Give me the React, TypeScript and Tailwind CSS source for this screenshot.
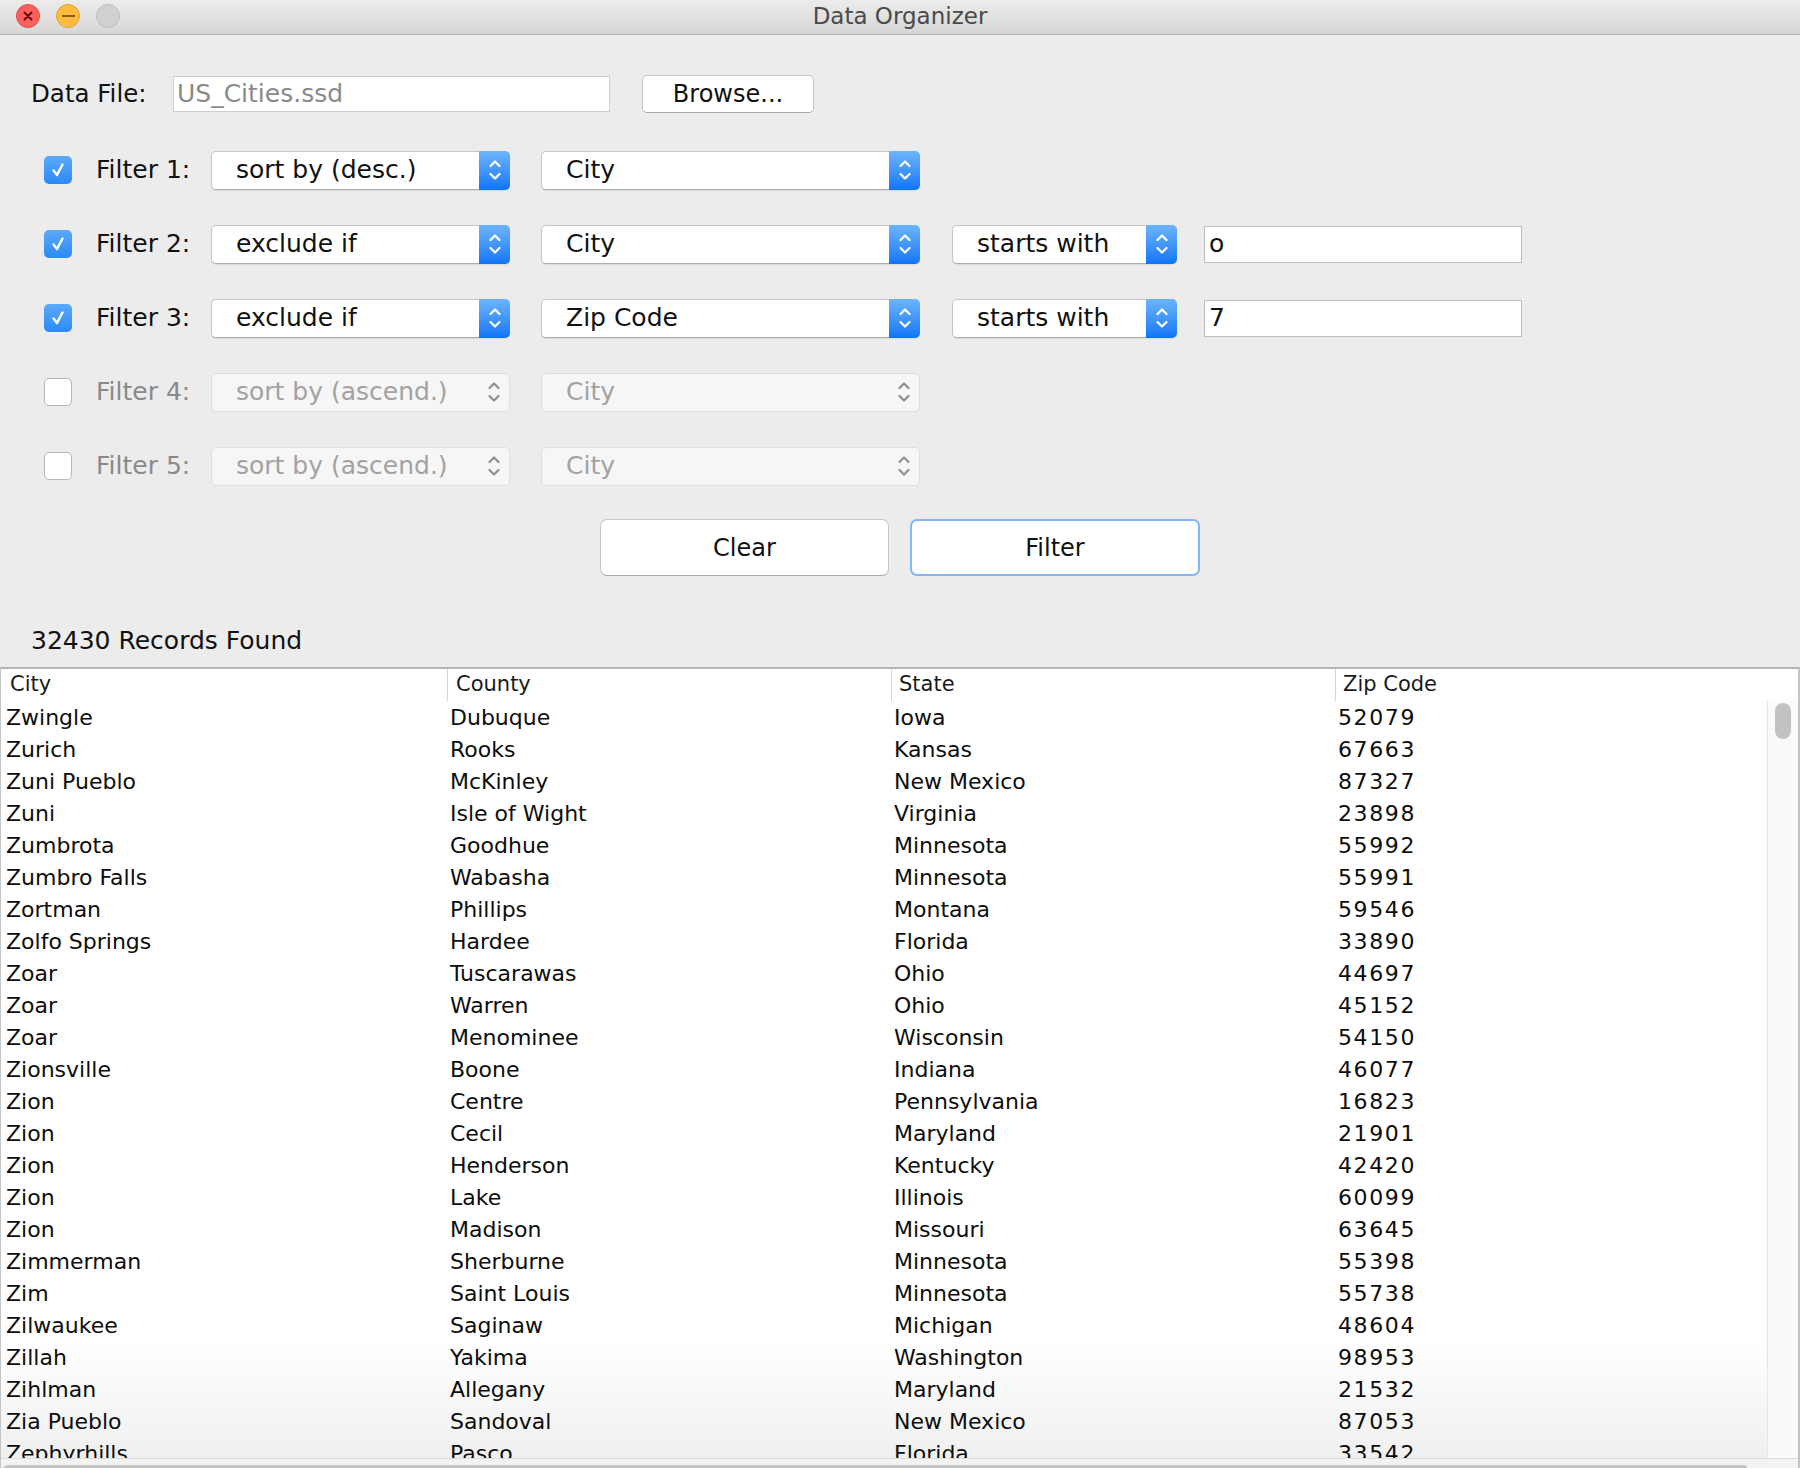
import React from 'react'

const rows = [
  ['Zwingle', 'Dubuque', 'Iowa', '52079'],
  ['Zurich', 'Rooks', 'Kansas', '67663'],
  ['Zuni Pueblo', 'McKinley', 'New Mexico', '87327'],
  ['Zuni', 'Isle of Wight', 'Virginia', '23898'],
  ['Zumbrota', 'Goodhue', 'Minnesota', '55992'],
  ['Zumbro Falls', 'Wabasha', 'Minnesota', '55991'],
  ['Zortman', 'Phillips', 'Montana', '59546'],
  ['Zolfo Springs', 'Hardee', 'Florida', '33890'],
  ['Zoar', 'Tuscarawas', 'Ohio', '44697'],
  ['Zoar', 'Warren', 'Ohio', '45152'],
  ['Zoar', 'Menominee', 'Wisconsin', '54150'],
  ['Zionsville', 'Boone', 'Indiana', '46077'],
  ['Zion', 'Centre', 'Pennsylvania', '16823'],
  ['Zion', 'Cecil', 'Maryland', '21901'],
  ['Zion', 'Henderson', 'Kentucky', '42420'],
  ['Zion', 'Lake', 'Illinois', '60099'],
  ['Zion', 'Madison', 'Missouri', '63645'],
  ['Zimmerman', 'Sherburne', 'Minnesota', '55398'],
  ['Zim', 'Saint Louis', 'Minnesota', '55738'],
  ['Zilwaukee', 'Saginaw', 'Michigan', '48604'],
  ['Zillah', 'Yakima', 'Washington', '98953'],
  ['Zihlman', 'Allegany', 'Maryland', '21532'],
  ['Zia Pueblo', 'Sandoval', 'New Mexico', '87053'],
  ['Zephyrhills', 'Pasco', 'Florida', '33542'],
]

const filters = [
  { on: true, op: 'sort by (desc.)', field: 'City' },
  { on: true, op: 'exclude if', field: 'City', cond: 'starts with', value: 'o' },
  { on: true, op: 'exclude if', field: 'Zip Code', cond: 'starts with', value: '7' },
  { on: false, op: 'sort by (ascend.)', field: 'City' },
  { on: false, op: 'sort by (ascend.)', field: 'City' },
]

function Chevrons({ color }: { color: string }) {
  return (
    <svg width="14" height="26" viewBox="0 0 14 26" fill="none" stroke={color} strokeWidth="2.2" strokeLinecap="round" strokeLinejoin="round">
      <path d="M2.5 9 L7 4.5 L11.5 9" />
      <path d="M2.5 17 L7 21.5 L11.5 17" />
    </svg>
  )
}

function Combo({ label, width, enabled }: { label: string; width: string; enabled: boolean }) {
  if (!enabled) {
    return (
      <div className={`${width} h-[39px] flex items-center rounded-[5px] border border-[#dedede] bg-[#f6f6f6]`}>
        <span className="flex-1 pl-[24px] text-[25px] text-[#a2a2a2]">{label}</span>
        <div className="w-[31px] flex justify-center">
          <Chevrons color="#8f8f8f" />
        </div>
      </div>
    )
  }
  return (
    <div className={`${width} h-[39px] flex items-stretch rounded-[5px] border border-[#c6c6c6] border-b-[#acacac] bg-white shadow-[0_1px_1px_rgba(0,0,0,0.08)]`}>
      <span className="flex-1 flex items-center pl-[24px] text-[25px] text-[#111]">{label}</span>
      <div className="w-[31px] -my-px -mr-px flex items-center justify-center rounded-r-[5px] bg-gradient-to-b from-[#6cb4fb] to-[#0a75f6]">
        <Chevrons color="#ffffff" />
      </div>
    </div>
  )
}

function Checkbox({ on }: { on: boolean }) {
  if (!on) {
    return <div className="w-[28px] h-[28px] rounded-[5px] border border-[#b7b7b7] bg-white" />
  }
  return (
    <div className="w-[28px] h-[28px] rounded-[5px] bg-gradient-to-b from-[#5aa9fb] to-[#2a8af5] flex items-center justify-center">
      <svg width="18" height="18" viewBox="0 0 18 18" fill="none" stroke="#fff" strokeWidth="2.4" strokeLinecap="round" strokeLinejoin="round">
        <path d="M4.5 9.5 L8 14 L13.5 3.5" />
      </svg>
    </div>
  )
}

export default function App() {
  return (
    <div className="w-[1800px] h-[1468px] overflow-hidden flex flex-col bg-[#ececec] font-['DejaVu_Sans',sans-serif] text-[#111]">
      {/* title bar */}
      <div className="relative h-[35px] flex-shrink-0 flex items-center justify-center bg-gradient-to-b from-[#ececec] to-[#d6d6d6] border-b border-[#b3b3b3]">
        <div className="absolute left-[16px] top-[4px] flex gap-[16px]">
          <div className="w-[24px] h-[24px] rounded-full bg-[#fc605c] border border-[#de4a45] flex items-center justify-center">
            <svg width="12" height="12" viewBox="0 0 12 12" stroke="#5a0505" strokeWidth="1.8" strokeLinecap="round">
              <path d="M2.5 2.5 L9.5 9.5 M9.5 2.5 L2.5 9.5" />
            </svg>
          </div>
          <div className="w-[24px] h-[24px] rounded-full bg-[#fdbc40] border border-[#dea236] flex items-center justify-center">
            <div className="w-[13px] h-[2px] bg-[#8f5a06]" />
          </div>
          <div className="w-[24px] h-[24px] rounded-full bg-[#d1d1d1] border border-[#bdbdbd]" />
        </div>
        <span className="-mt-[2px] text-[23px] text-[#4a4a4a]">Data Organizer</span>
      </div>

      {/* data file */}
      <div className="mt-[39px] h-[40px] flex items-center pl-[31px]">
        <span className="w-[142px] text-[24.5px]">Data File:</span>
        <div className="w-[437px] h-[36px] flex items-center pl-[3px] bg-white border border-[#cfcfcf] text-[25px] text-[#8a8a8a]">
          US_Cities.ssd
        </div>
        <button className="ml-[32px] w-[172px] h-[38px] rounded-[5px] bg-white border border-[#c6c6c6] border-b-[#a9a9a9] text-[24px] text-[#111]">
          Browse...
        </button>
      </div>

      {/* filters */}
      <div className="mt-[36px] flex flex-col gap-[34px]">
        {filters.map((f, i) => (
          <div key={i} className="h-[40px] flex items-center pl-[44px]">
            <Checkbox on={f.on} />
            <span className={`ml-[24px] w-[115px] text-[25px] ${f.on ? 'text-[#111]' : 'text-[#8a8a8a]'}`}>
              Filter {i + 1}:
            </span>
            <Combo label={f.op} width="w-[299px]" enabled={f.on} />
            <div className="ml-[31px]">
              <Combo label={f.field} width="w-[379px]" enabled={f.on} />
            </div>
            {f.cond && (
              <>
                <div className="ml-[32px]">
                  <Combo label={f.cond} width="w-[225px]" enabled={f.on} />
                </div>
                <div className="ml-[27px] w-[318px] h-[37px] flex items-center pl-[4px] bg-white border border-[#bdbdbd] text-[25px]">
                  {f.value}
                </div>
              </>
            )}
          </div>
        ))}
      </div>

      {/* buttons */}
      <div className="mt-[33px] flex justify-center gap-[21px]">
        <button className="w-[289px] h-[57px] rounded-[7px] bg-white border border-[#c6c6c6] border-b-[#a9a9a9] text-[24px]">
          Clear
        </button>
        <button className="w-[290px] h-[57px] rounded-[7px] bg-white border-2 border-[#82b7f3] text-[24px]">
          Filter
        </button>
      </div>

      <div className="mt-[50px] h-[30px] pl-[31px] flex items-center text-[25px]">32430 Records Found</div>

      {/* table */}
      <div className="mt-[11px] flex-1 min-h-0 flex flex-col bg-white border-t-2 border-[#b4b4b4] border-l border-r-2 border-l-[#c4c4c4] border-r-[#c4c4c4]">
        <div className="h-[32px] flex-shrink-0 grid grid-cols-[446px_444px_444px_1fr] items-center text-[21px] text-[#1a1a1a]">
          <div className="pl-[9px]">City</div>
          <div className="pl-[8px] border-l border-[#d6d6d6]">County</div>
          <div className="pl-[7px] border-l border-[#d6d6d6]">State</div>
          <div className="pl-[7px] border-l border-[#d6d6d6]">Zip Code</div>
        </div>
        <div className="flex-1 min-h-0 flex">
          <div className="relative flex-1 overflow-hidden">
            {rows.map((r, i) => (
              <div key={i} className="h-[32px] grid grid-cols-[446px_444px_444px_1fr] items-center text-[22px] text-[#0d0d0d] whitespace-nowrap">
                <div className="pl-[5px]">{r[0]}</div>
                <div className="pl-[3px]">{r[1]}</div>
                <div className="pl-[3px]">{r[2]}</div>
                <div className="pl-[3px] tracking-[1.6px]">{r[3]}</div>
              </div>
            ))}
            <div className="pointer-events-none absolute left-0 right-0 bottom-0 h-[120px] bg-gradient-to-b from-transparent to-[#000000]/[0.06]" />
          </div>
          <div className="w-[31px] flex-shrink-0 bg-[#fafafa] border-l border-[#e6e6e6] pt-[2px] pl-[7px]">
            <div className="w-[16px] h-[36px] rounded-full bg-[#c2c2c2]" />
          </div>
        </div>
        <div className="h-[10px] flex-shrink-0 flex bg-[#f3f3f3] border-t border-[#dcdcdc]">
          <div className="ml-[2px] mt-[6px] w-[1745px] h-[10px] rounded-full bg-[#c4c4c4]" />
        </div>
      </div>
    </div>
  )
}
